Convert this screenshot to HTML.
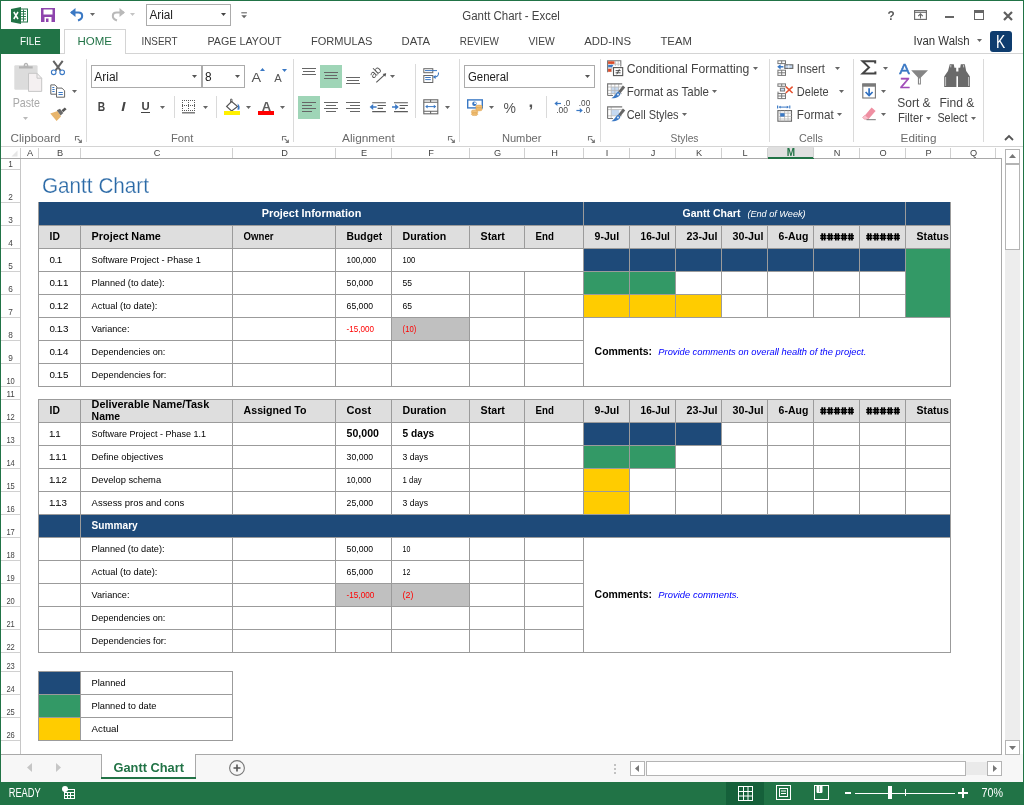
<!DOCTYPE html>
<html><head><meta charset="utf-8"><title>Gantt Chart - Excel</title>
<style>
html,body{margin:0;padding:0}
body{width:1024px;height:805px;position:relative;overflow:hidden;background:#fff;font-family:"Liberation Sans",sans-serif;color:#000}
.a{position:absolute;box-sizing:border-box}
.t{white-space:nowrap;line-height:1;transform:translateY(-50%)}
.tc{white-space:nowrap;line-height:1;transform:translate(-50%,-50%)}
.tr{white-space:nowrap;line-height:1;transform:translate(-100%,-50%)}
.rib{font-size:12px;color:#444}
.lbl{font-size:12px;color:#6a6a6a}
.tab{font-size:11px;color:#444}
.cell{font-size:9.2px;color:#000}
.b{font-weight:bold;font-size:10px;letter-spacing:.5px}
.hn{font-size:10px;color:#333}
svg{position:absolute;overflow:visible}
.gs{will-change:transform}

</style></head>
<body>
<div class="a " style="left:0px;top:0px;width:1024px;height:1px;background:#217346"></div>
<div class="a " style="left:0px;top:0px;width:1px;height:805px;background:#217346"></div>
<div class="a " style="left:1023px;top:0px;width:1px;height:805px;background:#217346"></div>
<div class="a " style="left:146px;top:4px;width:85px;height:22px;border:1px solid #ababab;background:#fff"></div>
<svg class="a" style="left:221.0px;top:13.1px" width="5" height="3"><path d="M0 0H5L2.5 3Z" fill="#444"/></svg>
<svg class="a" style="left:240.5px;top:12.4px" width="7" height="8"><path d="M0.3 0.8H5.9" stroke="#666" stroke-width="1.1"/><path d="M0.3 3.2H5.9L3.1 6.2Z" fill="#666"/></svg>
<div class="a " style="left:1px;top:53px;width:1022px;height:1px;background:#d4d4d4"></div>
<div class="a " style="left:1px;top:29px;width:59px;height:25px;background:#217346"></div>
<div class="a " style="left:64px;top:29px;width:62px;height:25px;border:1px solid #d4d4d4;border-bottom:none;background:#fff"></div>
<svg class="a" style="left:977.0px;top:38.9px" width="5" height="3"><path d="M0 0H5L2.5 3Z" fill="#666"/></svg>
<div class="a " style="left:990px;top:31px;width:22px;height:21px;background:#0e3c6e;border-radius:3px"></div>
<div class="a " style="left:1px;top:146px;width:1022px;height:1px;background:#d4d4d4"></div>
<div class="a " style="left:86px;top:59px;width:1px;height:83px;background:#dadada"></div>
<div class="a " style="left:293px;top:59px;width:1px;height:83px;background:#dadada"></div>
<div class="a " style="left:459px;top:59px;width:1px;height:83px;background:#dadada"></div>
<div class="a " style="left:600px;top:59px;width:1px;height:83px;background:#dadada"></div>
<div class="a " style="left:769px;top:59px;width:1px;height:83px;background:#dadada"></div>
<div class="a " style="left:853px;top:59px;width:1px;height:83px;background:#dadada"></div>
<div class="a " style="left:983px;top:59px;width:1px;height:83px;background:#dadada"></div>
<div class="a " style="left:174px;top:96px;width:1px;height:22px;background:#dadada"></div>
<div class="a " style="left:216px;top:96px;width:1px;height:22px;background:#dadada"></div>
<div class="a " style="left:415px;top:64px;width:1px;height:54px;background:#dadada"></div>
<div class="a " style="left:546px;top:96px;width:1px;height:22px;background:#dadada"></div>
<svg class="a" style="left:75.3px;top:135.5px" width="8" height="8"><path d="M0.5 4.4V0.5H4.4" fill="none" stroke="#777" stroke-width="1.1"/><path d="M2.6 2.6L6.2 6.2" fill="none" stroke="#777" stroke-width="1.1"/><path d="M6.9 3.2V6.9H3.2Z" fill="#777"/></svg>
<svg class="a" style="left:282.3px;top:135.5px" width="8" height="8"><path d="M0.5 4.4V0.5H4.4" fill="none" stroke="#777" stroke-width="1.1"/><path d="M2.6 2.6L6.2 6.2" fill="none" stroke="#777" stroke-width="1.1"/><path d="M6.9 3.2V6.9H3.2Z" fill="#777"/></svg>
<svg class="a" style="left:448.3px;top:135.5px" width="8" height="8"><path d="M0.5 4.4V0.5H4.4" fill="none" stroke="#777" stroke-width="1.1"/><path d="M2.6 2.6L6.2 6.2" fill="none" stroke="#777" stroke-width="1.1"/><path d="M6.9 3.2V6.9H3.2Z" fill="#777"/></svg>
<svg class="a" style="left:588.3px;top:135.5px" width="8" height="8"><path d="M0.5 4.4V0.5H4.4" fill="none" stroke="#777" stroke-width="1.1"/><path d="M2.6 2.6L6.2 6.2" fill="none" stroke="#777" stroke-width="1.1"/><path d="M6.9 3.2V6.9H3.2Z" fill="#777"/></svg>
<svg class="a" style="left:14px;top:62px" width="29" height="31"><rect x="0.3" y="3.3" width="23.3" height="24.4" rx="1.2" fill="#dcdcdc"/><path d="M5 6.6V4.2H9.6C9.6 -0.4 14.4 -0.4 14.4 4.2H18.7V6.6Z" fill="#b4b4b4"/><circle cx="12" cy="3" r="1" fill="#e8e8e8"/><path d="M14.5 11.3H23L27.7 16.2V29.4H14.5Z" fill="#f4f0f1" stroke="#c6c6c6"/><path d="M23 11.3V16.2H27.7" fill="none" stroke="#c6c6c6"/></svg>
<svg class="a" style="left:23.1px;top:117.2px" width="5" height="3"><path d="M0 0H5L2.5 3Z" fill="#b9b9b9"/></svg>
<svg class="a" style="left:50px;top:60px" width="16" height="16"><path d="M3.3 0.8L10.6 10.6M12.7 0.8L5.4 10.6" stroke="#636363" stroke-width="2" fill="none"/><circle cx="3.7" cy="12.3" r="2.3" fill="#fff" stroke="#3a78c4" stroke-width="1.1"/><circle cx="12.2" cy="12.3" r="2.3" fill="#fff" stroke="#3a78c4" stroke-width="1.1"/></svg>
<svg class="a" style="left:50px;top:84px" width="16" height="14"><path d="M0.8 0.9H5L7 3V10.2H0.8Z" fill="#fff" stroke="#666"/><path d="M6.5 4.1H12L14.6 6.8V13.2H6.5Z" fill="#fff" stroke="#666"/><path d="M8.5 8.5H12.8M8.5 10.5H12.8" stroke="#3a78c4"/><path d="M2.3 3.5H4.3M2.3 5.5H4.6M2.3 7.5H4.6" stroke="#3a78c4"/></svg>
<svg class="a" style="left:72.0px;top:89.8px" width="5" height="3"><path d="M0 0H5L2.5 3Z" fill="#666"/></svg>
<svg class="a" style="left:50px;top:107px" width="17" height="15"><path d="M0.3 6.6L7.6 4.1L11 9.5L6.6 13.9Z" fill="#e8b56c"/><path d="M6.8 3.3L10 1.8L13.3 6L10.6 8.6Z" fill="#6a6a6a"/><path d="M11.5 3.3L14.8 0.4L16.6 2.2L13.2 5.3Z" fill="#555"/></svg>
<div class="a " style="left:91px;top:65px;width:111px;height:23px;border:1px solid #ababab;background:#fff"></div>
<div class="a " style="left:202px;top:65px;width:43px;height:23px;border:1px solid #ababab;background:#fff"></div>
<svg class="a" style="left:191.7px;top:75.0px" width="5" height="3"><path d="M0 0H5L2.5 3Z" fill="#555"/></svg>
<svg class="a" style="left:235.0px;top:75.0px" width="5" height="3"><path d="M0 0H5L2.5 3Z" fill="#555"/></svg>
<svg class="a" style="left:259.5px;top:68px" width="5" height="3"><path d="M0 3H5L2.5 0Z" fill="#3a78c4"/></svg>
<svg class="a" style="left:281.5px;top:68.5px" width="5" height="3"><path d="M0 0H5L2.5 3Z" fill="#3a78c4"/></svg>
<div class="a " style="left:141px;top:111.5px;width:9px;height:1px;background:#444"></div>
<svg class="a" style="left:160.0px;top:105.8px" width="5" height="3"><path d="M0 0H5L2.5 3Z" fill="#666"/></svg>
<svg class="a" style="left:182px;top:100px" width="14" height="14"><path d="M0.5 0V11M6.5 0V11M12.5 0V11M0 0.5H13M0 5.5H13M0 10.5H13" stroke="#5a5a5a" stroke-dasharray="1 1" fill="none"/><path d="M0 12.8H13" stroke="#666" stroke-width="1.3"/></svg>
<svg class="a" style="left:202.8px;top:105.8px" width="5" height="3"><path d="M0 0H5L2.5 3Z" fill="#666"/></svg>
<svg class="a" style="left:224px;top:98px" width="17" height="18"><path d="M2.6 8.5L7.6 3.5L13.6 8.5L7.6 13Z" fill="#fff" stroke="#555" stroke-width="1.1"/><path d="M6.6 5V1.2H8V4" stroke="#555" fill="none" stroke-width=".9"/><path d="M13.4 5.5C15.6 7 16.2 9.5 15.2 11.8L13.2 11.4C14.3 9.8 14.2 7.6 13.4 5.5Z" fill="#3a78c4"/><rect x="0" y="13" width="16" height="4" fill="#fff000"/></svg>
<svg class="a" style="left:246.0px;top:105.8px" width="5" height="3"><path d="M0 0H5L2.5 3Z" fill="#666"/></svg>
<div class="a " style="left:258px;top:111px;width:16px;height:4px;background:#f00"></div>
<svg class="a" style="left:279.8px;top:105.8px" width="5" height="3"><path d="M0 0H5L2.5 3Z" fill="#666"/></svg>
<div class="a " style="left:320px;top:65px;width:22px;height:23px;background:#9fd5b7"></div>
<div class="a " style="left:298px;top:96px;width:22px;height:23px;background:#9fd5b7"></div>
<svg class="a" style="left:302px;top:68px" width="16" height="9"><path d="M0 0.5H14M1 3.5H13M0 6.5H14" stroke="#666" stroke-width="1"/></svg>
<svg class="a" style="left:324px;top:72px" width="16" height="9"><path d="M0 0.5H14M1 3.5H13M0 6.5H14" stroke="#666" stroke-width="1"/></svg>
<svg class="a" style="left:346px;top:77px" width="16" height="9"><path d="M0 0.5H14M1 3.5H13M0 6.5H14" stroke="#666" stroke-width="1"/></svg>
<svg class="a" style="left:302px;top:102px" width="16" height="12"><path d="M0 0.5H14M0 3.5H10M0 6.5H14M0 9.5H10" stroke="#666" stroke-width="1"/></svg>
<svg class="a" style="left:324px;top:102px" width="16" height="12"><path d="M0 0.5H14M2 3.5H12M0 6.5H14M2 9.5H12" stroke="#666" stroke-width="1"/></svg>
<svg class="a" style="left:346px;top:102px" width="16" height="12"><path d="M0 0.5H14M4 3.5H14M0 6.5H14M4 9.5H14" stroke="#666" stroke-width="1"/></svg>
<svg class="a gs" style="left:368px;top:64px" width="20" height="20" font-family="Liberation Sans, sans-serif"><text x="0" y="0" font-size="11" fill="#555" transform="translate(5.4 15) rotate(-45)">ab</text><path d="M8.3 18.3L17.6 9.8" stroke="#555" stroke-width="1.1" fill="none"/><path d="M18.2 9.2L14.6 10L17.4 12.8Z" fill="#555"/></svg>
<svg class="a" style="left:389.8px;top:75.0px" width="5" height="3"><path d="M0 0H5L2.5 3Z" fill="#666"/></svg>
<svg class="a" style="left:369px;top:102px" width="18" height="11"><path d="M3.2 0.7H16.9M8.6 3.5H16.9M8.6 6.4H14M3.2 9.6H16.9" stroke="#5a5a5a" stroke-width="1.1"/><path d="M3.2 0.7H5.2M3.2 9.6H5.2" stroke="#fff" stroke-width="0" /><path d="M7.6 5H2" stroke="#3a78c4" stroke-width="1.5" fill="none"/><path d="M0.6 5L4.2 2V8Z" fill="#3a78c4"/></svg>
<svg class="a" style="left:391px;top:102px" width="18" height="11"><path d="M3 0.7H16.9M8.6 3.5H16.9M8.6 6.4H14M3 9.6H16.9" stroke="#5a5a5a" stroke-width="1.1"/><path d="M1 5H6" stroke="#3a78c4" stroke-width="1.5" fill="none"/><path d="M7.8 5L4.2 2V8Z" fill="#3a78c4"/></svg>
<svg class="a" style="left:423px;top:67px" width="17" height="17"><rect x="0.8" y="1.7" width="9" height="4" fill="#fff" stroke="#666"/><path d="M2 3.6H14" stroke="#3a78c4"/><rect x="0.8" y="8.5" width="9" height="7" fill="#fff" stroke="#666"/><path d="M2.2 10.5H7.8M2.2 12.6H7.8" stroke="#3a78c4"/><path d="M15.4 5.5C16.2 8.5 14 10 11 10" fill="none" stroke="#3a78c4" stroke-width="1.1"/><path d="M9.8 10L12.6 8V12Z" fill="#3a78c4"/></svg>
<svg class="a" style="left:423px;top:99px" width="16" height="16"><rect x="0.8" y="0.8" width="14" height="14" fill="#fff" stroke="#666" stroke-width="1.1"/><path d="M0.8 3.2H14.8M0.8 12.2H14.8M7.6 0.8V3.2M7.6 12.2V14.8" stroke="#666" stroke-width="1.1"/><path d="M3.4 7.6H12.2" stroke="#3a78c4"/><path d="M2.2 7.6L4.6 5.8V9.4ZM13.2 7.6L10.8 5.8V9.4Z" fill="#3a78c4"/></svg>
<svg class="a" style="left:444.5px;top:105.8px" width="5" height="3"><path d="M0 0H5L2.5 3Z" fill="#666"/></svg>
<div class="a " style="left:464px;top:65px;width:131px;height:23px;border:1px solid #ababab;background:#fff"></div>
<svg class="a" style="left:584.5px;top:75.0px" width="5" height="3"><path d="M0 0H5L2.5 3Z" fill="#555"/></svg>
<svg class="a" style="left:467px;top:99px" width="17" height="17"><rect x="0.7" y="0.9" width="14.6" height="8" fill="#fff" stroke="#3a78c4" stroke-width="1.4"/><circle cx="7.4" cy="4.7" r="2.2" fill="#3a78c4"/><path d="M7 3.6H9V5H7.4" fill="#fff"/><g fill="#f1c27b" stroke="#d99b44" stroke-width=".5"><ellipse cx="12" cy="10.6" rx="3.2" ry="1.3"/><ellipse cx="12" cy="8.9" rx="3.2" ry="1.3"/><ellipse cx="12" cy="7.4" rx="3.2" ry="1.3"/><ellipse cx="7.6" cy="15.3" rx="3.2" ry="1.3"/><ellipse cx="7.6" cy="13.7" rx="3.2" ry="1.3"/><ellipse cx="7.6" cy="12.2" rx="3.2" ry="1.3"/></g></svg>
<svg class="a" style="left:489.0px;top:105.8px" width="5" height="3"><path d="M0 0H5L2.5 3Z" fill="#666"/></svg>
<svg class="a" style="left:554px;top:100px" width="8" height="7"><path d="M7 3.5H1.6" stroke="#3a78c4" stroke-width="1.2"/><path d="M0.4 3.5L3.4 1V6Z" fill="#3a78c4"/></svg>
<svg class="a" style="left:576px;top:107px" width="8" height="7"><path d="M0.4 3.5H5.4" stroke="#3a78c4" stroke-width="1.2"/><path d="M6.8 3.5L3.8 1V6Z" fill="#3a78c4"/></svg>
<svg class="a" style="left:607px;top:60px" width="17" height="17"><rect x="0.6" y="0.8" width="13.2" height="11.4" fill="#fff"/><path d="M0.6 12.2V0.8H13.8V6.5" fill="none" stroke="#777" stroke-width="1.1"/><path d="M4.6 1V12M8.4 1V6M11.2 1V6M1 4.2H13.6M1 8H6" stroke="#bbb" stroke-width=".8"/><rect x="1.1" y="1.3" width="6.4" height="2.6" fill="#dc4b28"/><path d="M1.1 5H6.4L5 7.3H1.1Z" fill="#3a78c4"/><rect x="1.1" y="8.8" width="3.2" height="3" fill="#dc4b28"/><rect x="6.5" y="7.6" width="9.2" height="8" fill="#fff" stroke="#555" stroke-width="1.1"/><path d="M8.6 10.6H13.6M8.6 12.8H13.6M9.8 14.3L12.4 9.2" stroke="#444" stroke-width=".9"/></svg>
<svg class="a" style="left:753.1px;top:67.3px" width="5" height="3"><path d="M0 0H5L2.5 3Z" fill="#666"/></svg>
<svg class="a" style="left:604px;top:81px" width="20" height="18"><g transform="translate(3 2)"><rect x="0.6" y="0.9" width="14.6" height="11.6" fill="#fff"/><rect x="4.2" y="4" width="7.6" height="6.6" fill="#c5d9f1"/><path d="M4.2 1V12.4M7.8 1V12.4M11.6 1V12.4M0.6 4H15M0.6 7.4H15M0.6 10.6H15" stroke="#b5b5b5" stroke-width=".8"/><path d="M0.6 12.5V0.9H15.2M0.6 12.5H6" fill="none" stroke="#777" stroke-width="1.1"/><path d="M15.9 2.4L18.2 4.4L13.4 10.2L11.2 8.4Z" fill="#666"/><path d="M11.2 8.6L13.4 10.4C13.2 13.4 9 15.6 4.4 15.2C7.4 13.6 8.6 10.4 11.2 8.6Z" fill="#3a78c4"/><circle cx="11" cy="11.6" r="1" fill="#dfe9f6"/></g></svg>
<svg class="a" style="left:711.8px;top:90.0px" width="5" height="3"><path d="M0 0H5L2.5 3Z" fill="#666"/></svg>
<svg class="a" style="left:604px;top:104px" width="20" height="18"><g transform="translate(3 2)"><rect x="0.6" y="0.9" width="14.6" height="11.6" fill="#fff"/><rect x="4.2" y="3.8" width="8" height="5.8" fill="#c5d9f1"/><path d="M4.2 1V12.4M0.6 3.6H15M0.6 9.8H15" stroke="#b5b5b5" stroke-width=".8"/><path d="M0.6 12.5V0.9H15.2M0.6 12.5H6" fill="none" stroke="#777" stroke-width="1.1"/><path d="M15.9 2.4L18.2 4.4L13.4 10.2L11.2 8.4Z" fill="#666"/><path d="M11.2 8.6L13.4 10.4C13.2 13.4 9 15.6 4.4 15.2C7.4 13.6 8.6 10.4 11.2 8.6Z" fill="#3a78c4"/><circle cx="11" cy="11.6" r="1" fill="#dfe9f6"/></g></svg>
<svg class="a" style="left:681.9px;top:113.0px" width="5" height="3"><path d="M0 0H5L2.5 3Z" fill="#666"/></svg>
<svg class="a" style="left:777px;top:60px" width="17" height="17"><rect x="0.9" y="0.8" width="7.6" height="2.8" fill="#fff" stroke="#777"/><path d="M4.7 0.8V3.6" stroke="#777"/><rect x="7.8" y="4.8" width="8" height="3.6" fill="#c5d9f1" stroke="#666" stroke-width="1.1"/><path d="M11.8 4.8V8.4" stroke="#fff" stroke-width=".8"/><rect x="0.9" y="10.2" width="7.6" height="5.2" fill="#fff" stroke="#777"/><path d="M4.7 10.2V15.4M0.9 12.8H8.5" stroke="#777"/><path d="M6.4 6.8H2" stroke="#3a78c4" stroke-width="1.5"/><path d="M0.2 6.8L3.6 4.2V9.4Z" fill="#3a78c4"/></svg>
<svg class="a" style="left:835.0px;top:67.3px" width="5" height="3"><path d="M0 0H5L2.5 3Z" fill="#666"/></svg>
<svg class="a" style="left:777px;top:83px" width="17" height="17"><rect x="0.9" y="0.9" width="7.6" height="2.4" fill="#fff" stroke="#777"/><path d="M4.7 0.9V3.3" stroke="#777"/><rect x="3.4" y="5.2" width="4.2" height="2.8" fill="#c5d9f1" stroke="#777"/><rect x="0.9" y="10.6" width="7.6" height="5" fill="#fff" stroke="#777"/><path d="M4.7 10.6V15.6M0.9 13H8.5M1 8.6V10.4H3" stroke="#777" fill="none"/><path d="M8.8 3.6L15.6 10M15.6 3.6L8.8 10" stroke="#e4502e" stroke-width="1.5"/></svg>
<svg class="a" style="left:838.9px;top:90.0px" width="5" height="3"><path d="M0 0H5L2.5 3Z" fill="#666"/></svg>
<svg class="a" style="left:777px;top:105px" width="17" height="18"><path d="M0.6 0.6V3.6M12.8 0.6V3.6" stroke="#3a78c4" stroke-width="1.1"/><path d="M3 2.1H10.4" stroke="#3a78c4"/><path d="M1.4 2.1L3.6 0.7V3.5ZM12 2.1L9.8 0.7V3.5Z" fill="#3a78c4"/><rect x="0.9" y="5.6" width="13.6" height="10.6" fill="#fff" stroke="#666" stroke-width="1.1"/><path d="M0.9 8.2H14.5M0.9 11.4H14.5M0.9 14H14.5M3.2 5.6V16.2M7.6 5.6V16.2M11 5.6V16.2" stroke="#b5b5b5" stroke-width=".8"/><rect x="3.2" y="8.2" width="4.4" height="3.4" fill="#3a78c4"/></svg>
<svg class="a" style="left:836.9px;top:113.0px" width="5" height="3"><path d="M0 0H5L2.5 3Z" fill="#666"/></svg>
<svg class="a" style="left:861px;top:60px" width="16" height="15"><path d="M14.2 3.4V1.2H1.6L8 7.4L1.6 13.6H14.4V11.4" fill="none" stroke="#444" stroke-width="2"/></svg>
<svg class="a" style="left:882.9px;top:67.1px" width="5" height="3"><path d="M0 0H5L2.5 3Z" fill="#666"/></svg>
<svg class="a" style="left:862px;top:83px" width="15" height="16"><rect x="0.8" y="1" width="12.6" height="14" fill="#fff" stroke="#777" stroke-width="1.1"/><rect x="0.3" y="0.5" width="13.6" height="3.2" fill="#7a7a7a"/><path d="M7.1 5.2V12" stroke="#2f6fc0" stroke-width="1.7"/><path d="M3.6 9L7.1 12.6L10.6 9" stroke="#2f6fc0" stroke-width="1.7" fill="none"/></svg>
<svg class="a" style="left:881.0px;top:89.8px" width="5" height="3"><path d="M0 0H5L2.5 3Z" fill="#666"/></svg>
<svg class="a" style="left:862px;top:107px" width="16" height="14"><path d="M9.6 0.6L13.6 4L7 11.6L3 8.2Z" fill="#ef8fa2"/><path d="M3 8.2L7 11.6L5.8 12.2H2.4L0.6 10.4Z" fill="#f7c2cc" stroke="#ef8fa2" stroke-width=".7"/><path d="M4.5 12.7H13.8" stroke="#777"/></svg>
<svg class="a" style="left:881.0px;top:112.9px" width="5" height="3"><path d="M0 0H5L2.5 3Z" fill="#666"/></svg>
<svg class="a" style="left:911px;top:70px" width="18" height="15"><path d="M0.2 0.2H17L9.9 7.6V14.4H6.9V7.6Z" fill="#858585"/><path d="M8 8.4V13.4H8.9V8.4Z" fill="#fff"/></svg>
<svg class="a" style="left:925.9px;top:116.9px" width="5" height="3"><path d="M0 0H5L2.5 3Z" fill="#666"/></svg>
<svg class="a" style="left:944px;top:64px" width="27" height="24"><path d="M5.8 0.2H9.8L10.4 3.8H12.2V7.6H14.4V3.8H16.2L16.8 0.2H20.8L22.2 7L25.9 12.4V22.9H14V12.2H12.4V22.9H0.2V12.4L4 7Z" fill="#6a6a6a"/><path d="M1.6 13V22M24.6 13V22M6.8 1V3.4M19.6 1V3.4" stroke="#d0d0d0" stroke-width=".9"/></svg>
<svg class="a" style="left:970.6px;top:116.9px" width="5" height="3"><path d="M0 0H5L2.5 3Z" fill="#666"/></svg>
<svg class="a" style="left:1004px;top:134px" width="10" height="7"><path d="M1 6L5 2L9 6" fill="none" stroke="#555" stroke-width="1.8"/></svg>
<svg class="a" style="left:914px;top:10px" width="13" height="10"><rect x="0.6" y="0.6" width="11.8" height="8.8" fill="none" stroke="#666" stroke-width="1.1"/><path d="M0.6 2.3H12.4" stroke="#666" stroke-width="1.1"/><path d="M6.5 8.6V4.2M4.2 6.2L6.5 3.8L8.8 6.2" stroke="#666" fill="none" stroke-width="1.1"/></svg>
<div class="a " style="left:945px;top:15.8px;width:9px;height:2.4px;background:#666"></div>
<svg class="a" style="left:974px;top:10px" width="10" height="10"><rect x="0.5" y="0.5" width="9" height="9" fill="none" stroke="#666"/><rect x="0" y="0" width="10" height="3" fill="#666"/></svg>
<svg class="a" style="left:1003px;top:11px" width="10" height="10"><path d="M1 1L9 9M9 1L1 9" stroke="#5e5e5e" stroke-width="2.2"/></svg>
<svg class="a" style="left:11px;top:7px" width="17" height="17"><rect x="8" y="2" width="8.5" height="13" fill="#fff" stroke="#217346"/><path d="M10 4.5H15M10 7H15M10 9.5H15M10 12H15M12.5 2.5V14.5" stroke="#217346" stroke-width=".9"/><path d="M0 2L10 0V17L0 15Z" fill="#217346"/><path d="M2.8 5L7 12M7 5L2.8 12" stroke="#fff" stroke-width="1.5"/></svg>
<svg class="a" style="left:41px;top:8px" width="14" height="14"><path d="M0 0H14V14H0Z" fill="#8e44ad"/><rect x="2.5" y="1.5" width="9" height="5" fill="#fff"/><rect x="3.5" y="9" width="7" height="5" fill="#fff"/><rect x="5" y="10.5" width="2.5" height="3.5" fill="#8e44ad"/></svg>
<svg class="a" style="left:70px;top:8px" width="15" height="14"><path d="M1 4.5H8.5C13 4.5 14 10.5 8 12.5" fill="none" stroke="#3a78c4" stroke-width="2"/><path d="M0 4.5L5.5 0V9Z" fill="#3a78c4"/></svg>
<svg class="a" style="left:90.1px;top:12.8px" width="5" height="3"><path d="M0 0H5L2.5 3Z" fill="#666"/></svg>
<svg class="a" style="left:110px;top:8px" width="15" height="14"><path d="M14 4.5H6.5C2 4.5 1 10.5 7 12.5" fill="none" stroke="#b9b9b9" stroke-width="2"/><path d="M15 4.5L9.5 0V9Z" fill="#b9b9b9"/></svg>
<svg class="a" style="left:129.9px;top:12.8px" width="5" height="3"><path d="M0 0H5L2.5 3Z" fill="#c4c4c4"/></svg>
<svg class="a" style="left:11px;top:150px" width="7" height="7"><path d="M6.5 0.5V6.5H0.5Z" fill="#e6e6e6"/></svg>
<div class="a " style="left:1px;top:158px;width:1001px;height:1px;background:#a9a9a9"></div>
<div class="a " style="left:768px;top:147px;width:46px;height:11px;background:#e0e0e0"></div>
<div class="a " style="left:768px;top:157px;width:46px;height:2px;background:#217346"></div>
<div class="a " style="left:20px;top:148px;width:1px;height:10px;background:#d0d0d0"></div>
<div class="a " style="left:38px;top:148px;width:1px;height:10px;background:#d0d0d0"></div>
<div class="a " style="left:80px;top:148px;width:1px;height:10px;background:#d0d0d0"></div>
<div class="a " style="left:232px;top:148px;width:1px;height:10px;background:#d0d0d0"></div>
<div class="a " style="left:335px;top:148px;width:1px;height:10px;background:#d0d0d0"></div>
<div class="a " style="left:391px;top:148px;width:1px;height:10px;background:#d0d0d0"></div>
<div class="a " style="left:469px;top:148px;width:1px;height:10px;background:#d0d0d0"></div>
<div class="a " style="left:524px;top:148px;width:1px;height:10px;background:#d0d0d0"></div>
<div class="a " style="left:583px;top:148px;width:1px;height:10px;background:#d0d0d0"></div>
<div class="a " style="left:629px;top:148px;width:1px;height:10px;background:#d0d0d0"></div>
<div class="a " style="left:675px;top:148px;width:1px;height:10px;background:#d0d0d0"></div>
<div class="a " style="left:721px;top:148px;width:1px;height:10px;background:#d0d0d0"></div>
<div class="a " style="left:767px;top:148px;width:1px;height:10px;background:#d0d0d0"></div>
<div class="a " style="left:813px;top:148px;width:1px;height:10px;background:#d0d0d0"></div>
<div class="a " style="left:859px;top:148px;width:1px;height:10px;background:#d0d0d0"></div>
<div class="a " style="left:905px;top:148px;width:1px;height:10px;background:#d0d0d0"></div>
<div class="a " style="left:950px;top:148px;width:1px;height:10px;background:#d0d0d0"></div>
<div class="a " style="left:995px;top:148px;width:1px;height:10px;background:#d0d0d0"></div>
<div class="a " style="left:20px;top:159px;width:1px;height:595px;background:#c6c6c6"></div>
<div class="a " style="left:1px;top:169px;width:19px;height:1px;background:#d0d0d0"></div>
<div class="a " style="left:1px;top:202px;width:19px;height:1px;background:#d0d0d0"></div>
<div class="a " style="left:1px;top:225px;width:19px;height:1px;background:#d0d0d0"></div>
<div class="a " style="left:1px;top:248px;width:19px;height:1px;background:#d0d0d0"></div>
<div class="a " style="left:1px;top:271px;width:19px;height:1px;background:#d0d0d0"></div>
<div class="a " style="left:1px;top:294px;width:19px;height:1px;background:#d0d0d0"></div>
<div class="a " style="left:1px;top:317px;width:19px;height:1px;background:#d0d0d0"></div>
<div class="a " style="left:1px;top:340px;width:19px;height:1px;background:#d0d0d0"></div>
<div class="a " style="left:1px;top:363px;width:19px;height:1px;background:#d0d0d0"></div>
<div class="a " style="left:1px;top:386px;width:19px;height:1px;background:#d0d0d0"></div>
<div class="a " style="left:1px;top:399px;width:19px;height:1px;background:#d0d0d0"></div>
<div class="a " style="left:1px;top:422px;width:19px;height:1px;background:#d0d0d0"></div>
<div class="a " style="left:1px;top:445px;width:19px;height:1px;background:#d0d0d0"></div>
<div class="a " style="left:1px;top:468px;width:19px;height:1px;background:#d0d0d0"></div>
<div class="a " style="left:1px;top:491px;width:19px;height:1px;background:#d0d0d0"></div>
<div class="a " style="left:1px;top:514px;width:19px;height:1px;background:#d0d0d0"></div>
<div class="a " style="left:1px;top:537px;width:19px;height:1px;background:#d0d0d0"></div>
<div class="a " style="left:1px;top:560px;width:19px;height:1px;background:#d0d0d0"></div>
<div class="a " style="left:1px;top:583px;width:19px;height:1px;background:#d0d0d0"></div>
<div class="a " style="left:1px;top:606px;width:19px;height:1px;background:#d0d0d0"></div>
<div class="a " style="left:1px;top:629px;width:19px;height:1px;background:#d0d0d0"></div>
<div class="a " style="left:1px;top:652px;width:19px;height:1px;background:#d0d0d0"></div>
<div class="a " style="left:1px;top:671px;width:19px;height:1px;background:#d0d0d0"></div>
<div class="a " style="left:1px;top:694px;width:19px;height:1px;background:#d0d0d0"></div>
<div class="a " style="left:1px;top:717px;width:19px;height:1px;background:#d0d0d0"></div>
<div class="a " style="left:1px;top:740px;width:19px;height:1px;background:#d0d0d0"></div>
<div class="a " style="left:1001px;top:158px;width:1px;height:596px;background:#a9a9a9"></div>
<div class="a " style="left:39px;top:203px;width:911px;height:22px;background:#1e4a79"></div>
<div class="a " style="left:39px;top:226px;width:911px;height:22px;background:#dedede"></div>
<div class="a " style="left:584px;top:249px;width:321px;height:22px;background:#1e4a79"></div>
<div class="a " style="left:584px;top:272px;width:91px;height:22px;background:#339966"></div>
<div class="a " style="left:584px;top:295px;width:137px;height:22px;background:#ffcc00"></div>
<div class="a " style="left:392px;top:318px;width:77px;height:22px;background:#c0c0c0"></div>
<div class="a " style="left:38px;top:202px;width:913px;height:1px;background:#9b9b9b"></div>
<div class="a " style="left:38px;top:225px;width:913px;height:1px;background:#9b9b9b"></div>
<div class="a " style="left:38px;top:248px;width:913px;height:1px;background:#9b9b9b"></div>
<div class="a " style="left:38px;top:271px;width:913px;height:1px;background:#9b9b9b"></div>
<div class="a " style="left:38px;top:294px;width:913px;height:1px;background:#9b9b9b"></div>
<div class="a " style="left:38px;top:317px;width:913px;height:1px;background:#9b9b9b"></div>
<div class="a " style="left:38px;top:340px;width:546px;height:1px;background:#9b9b9b"></div>
<div class="a " style="left:38px;top:363px;width:546px;height:1px;background:#9b9b9b"></div>
<div class="a " style="left:38px;top:386px;width:913px;height:1px;background:#9b9b9b"></div>
<div class="a " style="left:38px;top:202px;width:1px;height:185px;background:#9b9b9b"></div>
<div class="a " style="left:950px;top:202px;width:1px;height:185px;background:#9b9b9b"></div>
<div class="a " style="left:583px;top:202px;width:1px;height:185px;background:#9b9b9b"></div>
<div class="a " style="left:905px;top:202px;width:1px;height:116px;background:#9b9b9b"></div>
<div class="a " style="left:80px;top:225px;width:1px;height:162px;background:#9b9b9b"></div>
<div class="a " style="left:232px;top:225px;width:1px;height:162px;background:#9b9b9b"></div>
<div class="a " style="left:335px;top:225px;width:1px;height:162px;background:#9b9b9b"></div>
<div class="a " style="left:391px;top:225px;width:1px;height:162px;background:#9b9b9b"></div>
<div class="a " style="left:469px;top:225px;width:1px;height:24px;background:#9b9b9b"></div>
<div class="a " style="left:469px;top:271px;width:1px;height:116px;background:#9b9b9b"></div>
<div class="a " style="left:524px;top:225px;width:1px;height:24px;background:#9b9b9b"></div>
<div class="a " style="left:524px;top:271px;width:1px;height:116px;background:#9b9b9b"></div>
<div class="a " style="left:629px;top:225px;width:1px;height:93px;background:#9b9b9b"></div>
<div class="a " style="left:675px;top:225px;width:1px;height:93px;background:#9b9b9b"></div>
<div class="a " style="left:721px;top:225px;width:1px;height:93px;background:#9b9b9b"></div>
<div class="a " style="left:767px;top:225px;width:1px;height:93px;background:#9b9b9b"></div>
<div class="a " style="left:813px;top:225px;width:1px;height:93px;background:#9b9b9b"></div>
<div class="a " style="left:859px;top:225px;width:1px;height:93px;background:#9b9b9b"></div>
<div class="a " style="left:906px;top:249px;width:44px;height:68px;background:#339966"></div>
<div class="a " style="left:39px;top:202px;width:544px;height:1px;background:#1e4a79"></div>
<div class="a " style="left:584px;top:202px;width:321px;height:1px;background:#1e4a79"></div>
<div class="a " style="left:906px;top:202px;width:44px;height:1px;background:#1e4a79"></div>
<div class="a " style="left:39px;top:400px;width:911px;height:22px;background:#dedede"></div>
<div class="a " style="left:39px;top:515px;width:911px;height:22px;background:#1e4a79"></div>
<div class="a " style="left:584px;top:423px;width:137px;height:22px;background:#1e4a79"></div>
<div class="a " style="left:584px;top:446px;width:91px;height:22px;background:#339966"></div>
<div class="a " style="left:584px;top:469px;width:45px;height:45px;background:#ffcc00"></div>
<div class="a " style="left:336px;top:584px;width:133px;height:22px;background:#c0c0c0"></div>
<div class="a " style="left:38px;top:399px;width:913px;height:1px;background:#9b9b9b"></div>
<div class="a " style="left:38px;top:422px;width:913px;height:1px;background:#9b9b9b"></div>
<div class="a " style="left:38px;top:445px;width:913px;height:1px;background:#9b9b9b"></div>
<div class="a " style="left:38px;top:468px;width:913px;height:1px;background:#9b9b9b"></div>
<div class="a " style="left:38px;top:491px;width:913px;height:1px;background:#9b9b9b"></div>
<div class="a " style="left:38px;top:514px;width:913px;height:1px;background:#9b9b9b"></div>
<div class="a " style="left:38px;top:537px;width:913px;height:1px;background:#9b9b9b"></div>
<div class="a " style="left:38px;top:560px;width:546px;height:1px;background:#9b9b9b"></div>
<div class="a " style="left:38px;top:583px;width:546px;height:1px;background:#9b9b9b"></div>
<div class="a " style="left:38px;top:606px;width:546px;height:1px;background:#9b9b9b"></div>
<div class="a " style="left:38px;top:629px;width:546px;height:1px;background:#9b9b9b"></div>
<div class="a " style="left:38px;top:652px;width:913px;height:1px;background:#9b9b9b"></div>
<div class="a " style="left:38px;top:399px;width:1px;height:254px;background:#9b9b9b"></div>
<div class="a " style="left:950px;top:399px;width:1px;height:254px;background:#9b9b9b"></div>
<div class="a " style="left:80px;top:399px;width:1px;height:254px;background:#9b9b9b"></div>
<div class="a " style="left:232px;top:399px;width:1px;height:116px;background:#9b9b9b"></div>
<div class="a " style="left:232px;top:537px;width:1px;height:116px;background:#9b9b9b"></div>
<div class="a " style="left:335px;top:399px;width:1px;height:116px;background:#9b9b9b"></div>
<div class="a " style="left:335px;top:537px;width:1px;height:116px;background:#9b9b9b"></div>
<div class="a " style="left:391px;top:399px;width:1px;height:116px;background:#9b9b9b"></div>
<div class="a " style="left:391px;top:537px;width:1px;height:116px;background:#9b9b9b"></div>
<div class="a " style="left:469px;top:399px;width:1px;height:116px;background:#9b9b9b"></div>
<div class="a " style="left:469px;top:537px;width:1px;height:116px;background:#9b9b9b"></div>
<div class="a " style="left:524px;top:399px;width:1px;height:116px;background:#9b9b9b"></div>
<div class="a " style="left:524px;top:537px;width:1px;height:116px;background:#9b9b9b"></div>
<div class="a " style="left:583px;top:399px;width:1px;height:116px;background:#9b9b9b"></div>
<div class="a " style="left:583px;top:537px;width:1px;height:116px;background:#9b9b9b"></div>
<div class="a " style="left:629px;top:399px;width:1px;height:116px;background:#9b9b9b"></div>
<div class="a " style="left:675px;top:399px;width:1px;height:116px;background:#9b9b9b"></div>
<div class="a " style="left:721px;top:399px;width:1px;height:116px;background:#9b9b9b"></div>
<div class="a " style="left:767px;top:399px;width:1px;height:116px;background:#9b9b9b"></div>
<div class="a " style="left:813px;top:399px;width:1px;height:116px;background:#9b9b9b"></div>
<div class="a " style="left:859px;top:399px;width:1px;height:116px;background:#9b9b9b"></div>
<div class="a " style="left:905px;top:399px;width:1px;height:116px;background:#9b9b9b"></div>
<div class="a " style="left:81px;top:515px;width:869px;height:22px;background:#1e4a79"></div>
<div class="a " style="left:583px;top:491px;width:47px;height:1px;background:#9b9b9b"></div>
<div class="a " style="left:39px;top:672px;width:41px;height:22px;background:#1e4a79"></div>
<div class="a " style="left:39px;top:695px;width:41px;height:22px;background:#339966"></div>
<div class="a " style="left:39px;top:718px;width:41px;height:22px;background:#ffcc00"></div>
<div class="a " style="left:38px;top:671px;width:195px;height:1px;background:#9b9b9b"></div>
<div class="a " style="left:38px;top:694px;width:195px;height:1px;background:#9b9b9b"></div>
<div class="a " style="left:38px;top:717px;width:195px;height:1px;background:#9b9b9b"></div>
<div class="a " style="left:38px;top:740px;width:195px;height:1px;background:#9b9b9b"></div>
<div class="a " style="left:38px;top:671px;width:1px;height:70px;background:#9b9b9b"></div>
<div class="a " style="left:80px;top:671px;width:1px;height:70px;background:#9b9b9b"></div>
<div class="a " style="left:232px;top:671px;width:1px;height:70px;background:#9b9b9b"></div>
<div class="a " style="left:1px;top:754px;width:1022px;height:28px;background:#f7f7f7"></div>
<div class="a " style="left:1px;top:754px;width:1001px;height:1px;background:#a9a9a9"></div>
<div class="a " style="left:1005px;top:164px;width:15px;height:577px;background:#ededed"></div>
<div class="a " style="left:1005px;top:149px;width:15px;height:15px;background:#fff;border:1px solid #b4b4b4"></div>
<svg class="a" style="left:1009px;top:154px" width="7" height="4"><path d="M0 4H7L3.5 0Z" fill="#777"/></svg>
<div class="a " style="left:1005px;top:164px;width:15px;height:86px;background:#fff;border:1px solid #b4b4b4"></div>
<div class="a " style="left:1005px;top:740px;width:15px;height:15px;background:#fff;border:1px solid #b4b4b4"></div>
<svg class="a" style="left:1009px;top:746px" width="7" height="4"><path d="M0 0H7L3.5 4Z" fill="#777"/></svg>
<div class="a " style="left:101px;top:754px;width:95px;height:25px;background:#fff;border-left:1px solid #a9a9a9;border-right:1px solid #a9a9a9"></div>
<div class="a " style="left:101px;top:777px;width:95px;height:2px;background:#217346"></div>
<svg class="a" style="left:27px;top:763px" width="5" height="9"><path d="M5 0V9L0 4.5Z" fill="#c6c6c6"/></svg>
<svg class="a" style="left:56px;top:763px" width="5" height="9"><path d="M0 0V9L5 4.5Z" fill="#c6c6c6"/></svg>
<svg class="a" style="left:229px;top:760px" width="16" height="16"><circle cx="8" cy="8" r="7.4" fill="none" stroke="#777" stroke-width="1.1"/><path d="M4.5 8H11.5M8 4.5V11.5" stroke="#555" stroke-width="1.6"/></svg>
<div class="a " style="left:613.5px;top:764px;width:2px;height:2px;background:#c2c2c2"></div>
<div class="a " style="left:613.5px;top:768px;width:2px;height:2px;background:#c2c2c2"></div>
<div class="a " style="left:613.5px;top:772px;width:2px;height:2px;background:#c2c2c2"></div>
<div class="a " style="left:630px;top:761px;width:15px;height:15px;background:#fff;border:1px solid #b4b4b4"></div>
<svg class="a" style="left:635px;top:765px" width="4" height="7"><path d="M4 0V7L0 3.5Z" fill="#777"/></svg>
<div class="a " style="left:646px;top:762px;width:341px;height:13px;background:#eaeaea"></div>
<div class="a " style="left:646px;top:761px;width:320px;height:15px;background:#fff;border:1px solid #b4b4b4"></div>
<div class="a " style="left:987px;top:761px;width:15px;height:15px;background:#fff;border:1px solid #b4b4b4"></div>
<svg class="a" style="left:993px;top:765px" width="4" height="7"><path d="M0 0V7L4 3.5Z" fill="#777"/></svg>
<div class="a " style="left:0px;top:782px;width:1024px;height:23px;background:#217346"></div>
<svg class="a" style="left:62px;top:786px" width="13" height="13"><rect x="2.5" y="3.5" width="10" height="9" fill="none" stroke="#fff"/><path d="M2.5 6.5H12.5M2.5 9.5H12.5M5.5 6.5V12.5M8.5 6.5V12.5" stroke="#fff"/><circle cx="3" cy="3" r="3" fill="#fff"/></svg>
<div class="a " style="left:726px;top:782px;width:38px;height:23px;background:#15603a"></div>
<svg class="a" style="left:738px;top:786px" width="15" height="15"><rect x="0.5" y="0.5" width="14" height="14" fill="none" stroke="#fff"/><path d="M0.5 5.5H14.5M0.5 10H14.5M5.5 0.5V14.5M10 0.5V14.5" stroke="#fff"/></svg>
<svg class="a" style="left:776px;top:785px" width="15" height="15"><rect x="0.5" y="0.5" width="14" height="14" fill="none" stroke="#fff"/><rect x="3.5" y="3.5" width="8" height="8" fill="none" stroke="#fff"/><path d="M5 6H10M5 8.5H10" stroke="#fff"/></svg>
<svg class="a" style="left:814px;top:785px" width="15" height="15"><rect x="0.5" y="0.5" width="14" height="14" fill="none" stroke="#fff"/><path d="M3 0.5V7.5H8V0.5" fill="none" stroke="#fff"/><rect x="3" y="0" width="2.5" height="7" fill="#fff"/><rect x="6" y="0" width="2" height="7" fill="#fff"/></svg>
<div class="a " style="left:845px;top:792px;width:6px;height:2px;background:#fff"></div>
<div class="a " style="left:855px;top:792.5px;width:100px;height:1px;background:#fff"></div>
<div class="a " style="left:888px;top:786px;width:4px;height:13px;background:#fff"></div>
<div class="a " style="left:905px;top:789px;width:1px;height:7px;background:#fff"></div>
<div class="a " style="left:958px;top:792px;width:10px;height:2px;background:#fff"></div>
<div class="a " style="left:962px;top:788px;width:2px;height:10px;background:#fff"></div>
<svg class="a gs" style="left:0;top:0" width="1024" height="805" font-family="Liberation Sans, sans-serif"><text x="462.3" y="20.2" font-size="12.3" fill="#444" textLength="97.6" lengthAdjust="spacingAndGlyphs">Gantt Chart - Excel</text>
<text x="149.4" y="18.8" font-size="12.3" fill="#222" textLength="23.6" lengthAdjust="spacingAndGlyphs">Arial</text>
<text x="20" y="45.2" font-size="11.8" fill="#fff" textLength="21" lengthAdjust="spacingAndGlyphs">FILE</text>
<text x="77.5" y="45.2" font-size="11.8" fill="#217346" textLength="34.5" lengthAdjust="spacingAndGlyphs">HOME</text>
<text x="141.5" y="45.2" font-size="11.8" fill="#444" textLength="36.0" lengthAdjust="spacingAndGlyphs">INSERT</text>
<text x="207.5" y="45.2" font-size="11.8" fill="#444" textLength="74.0" lengthAdjust="spacingAndGlyphs">PAGE LAYOUT</text>
<text x="311" y="45.2" font-size="11.8" fill="#444" textLength="61.5" lengthAdjust="spacingAndGlyphs">FORMULAS</text>
<text x="401.5" y="45.2" font-size="11.8" fill="#444" textLength="28.5" lengthAdjust="spacingAndGlyphs">DATA</text>
<text x="459.8" y="45.2" font-size="11.8" fill="#444" textLength="39.1" lengthAdjust="spacingAndGlyphs">REVIEW</text>
<text x="528.4" y="45.2" font-size="11.8" fill="#444" textLength="26.4" lengthAdjust="spacingAndGlyphs">VIEW</text>
<text x="584.2" y="45.2" font-size="11.8" fill="#444" textLength="46.8" lengthAdjust="spacingAndGlyphs">ADD-INS</text>
<text x="660.4" y="45.2" font-size="11.8" fill="#444" textLength="31.5" lengthAdjust="spacingAndGlyphs">TEAM</text>
<text x="913.6" y="45.3" font-size="12.3" fill="#333" textLength="56" lengthAdjust="spacingAndGlyphs">Ivan Walsh</text>
<text x="996" y="47.8" font-size="17.5" fill="#fff" textLength="9.2" lengthAdjust="spacingAndGlyphs">K</text>
<text x="10.5" y="142" font-size="11.8" fill="#6a6a6a" textLength="50.1" lengthAdjust="spacingAndGlyphs">Clipboard</text>
<text x="171" y="142" font-size="11.8" fill="#6a6a6a" textLength="22.5" lengthAdjust="spacingAndGlyphs">Font</text>
<text x="342" y="142" font-size="11.8" fill="#6a6a6a" textLength="52.7" lengthAdjust="spacingAndGlyphs">Alignment</text>
<text x="501.9" y="142" font-size="11.8" fill="#6a6a6a" textLength="39.6" lengthAdjust="spacingAndGlyphs">Number</text>
<text x="670.6" y="142" font-size="11.8" fill="#6a6a6a" textLength="27.9" lengthAdjust="spacingAndGlyphs">Styles</text>
<text x="799" y="142" font-size="11.8" fill="#6a6a6a" textLength="24" lengthAdjust="spacingAndGlyphs">Cells</text>
<text x="900.6" y="142" font-size="11.8" fill="#6a6a6a" textLength="35.8" lengthAdjust="spacingAndGlyphs">Editing</text>
<text x="12.7" y="106.8" font-size="12.2" fill="#a9a9a9" textLength="27.3" lengthAdjust="spacingAndGlyphs">Paste</text>
<text x="94.3" y="80.8" font-size="12.3" fill="#222" textLength="24" lengthAdjust="spacingAndGlyphs">Arial</text>
<text x="205" y="80.8" font-size="12.3" fill="#222" textLength="6.6" lengthAdjust="spacingAndGlyphs">8</text>
<text x="251.4" y="81.7" font-size="13.6" fill="#555" textLength="9.6" lengthAdjust="spacingAndGlyphs">A</text>
<text x="274.2" y="81.7" font-size="10.6" fill="#555" textLength="7.5" lengthAdjust="spacingAndGlyphs">A</text>
<text x="97.8" y="110.8" font-size="12" fill="#444" font-weight="bold" textLength="7.4" lengthAdjust="spacingAndGlyphs">B</text>
<text x="121.3" y="110.8" font-size="12" fill="#444" font-weight="bold" font-style="italic" textLength="4.2" lengthAdjust="spacingAndGlyphs">I</text>
<text x="141.4" y="110.2" font-size="11.5" fill="#444" font-weight="bold" textLength="8.2" lengthAdjust="spacingAndGlyphs">U</text>
<text x="261.8" y="111" font-size="13.4" fill="#5e5e5e" font-weight="bold" textLength="9.4" lengthAdjust="spacingAndGlyphs">A</text>
<text x="468" y="80.8" font-size="12.3" fill="#222" textLength="40.5" lengthAdjust="spacingAndGlyphs">General</text>
<text x="503.4" y="113" font-size="15.3" fill="#555" textLength="12.4" lengthAdjust="spacingAndGlyphs">%</text>
<text x="528.6" y="107.2" font-size="17" fill="#555" font-weight="bold">,</text>
<text x="563.4" y="106.3" font-size="8.3" fill="#4a4a4a" textLength="6.8" lengthAdjust="spacingAndGlyphs">.0</text>
<text x="556.2" y="112.8" font-size="8.3" fill="#4a4a4a" textLength="11.8" lengthAdjust="spacingAndGlyphs">.00</text>
<text x="578.8" y="105.5" font-size="8.3" fill="#4a4a4a" textLength="11.4" lengthAdjust="spacingAndGlyphs">.00</text>
<text x="583.6" y="112.8" font-size="8.3" fill="#4a4a4a" textLength="6.6" lengthAdjust="spacingAndGlyphs">.0</text>
<text x="626.7" y="73" font-size="12.2" fill="#444" textLength="122.7" lengthAdjust="spacingAndGlyphs">Conditional Formatting</text>
<text x="626.7" y="95.6" font-size="12.2" fill="#444" textLength="82.3" lengthAdjust="spacingAndGlyphs">Format as Table</text>
<text x="626.7" y="118.7" font-size="12.2" fill="#444" textLength="51.9" lengthAdjust="spacingAndGlyphs">Cell Styles</text>
<text x="796.8" y="72.8" font-size="12.2" fill="#444" textLength="28.1" lengthAdjust="spacingAndGlyphs">Insert</text>
<text x="796.8" y="95.5" font-size="12.2" fill="#444" textLength="31.9" lengthAdjust="spacingAndGlyphs">Delete</text>
<text x="796.8" y="118.6" font-size="12.2" fill="#444" textLength="36.9" lengthAdjust="spacingAndGlyphs">Format</text>
<text x="904.6" y="74.3" font-size="14.6" fill="#3a78c4" text-anchor="middle" textLength="10.6" lengthAdjust="spacingAndGlyphs" stroke="#3a78c4" stroke-width=".5">A</text>
<text x="904.8" y="88.3" font-size="15.4" fill="#a04cb8" text-anchor="middle" textLength="9.8" lengthAdjust="spacingAndGlyphs" stroke="#a04cb8" stroke-width=".5">Z</text>
<text x="897.2" y="106.7" font-size="12.2" fill="#444" textLength="33.4" lengthAdjust="spacingAndGlyphs">Sort &amp;</text>
<text x="897.9" y="122.4" font-size="12.2" fill="#444" textLength="25.1" lengthAdjust="spacingAndGlyphs">Filter</text>
<text x="939.5" y="106.7" font-size="12.2" fill="#444" textLength="34.9" lengthAdjust="spacingAndGlyphs">Find &amp;</text>
<text x="937.4" y="122.4" font-size="12.2" fill="#444" textLength="30.1" lengthAdjust="spacingAndGlyphs">Select</text>
<text x="887.6" y="19.7" font-size="13.4" fill="#5a5a5a" font-weight="bold" textLength="7.2" lengthAdjust="spacingAndGlyphs">?</text>
<text x="30.0" y="155.6" font-size="9.2" fill="#444" text-anchor="middle">A</text>
<text x="60.0" y="155.6" font-size="9.2" fill="#444" text-anchor="middle">B</text>
<text x="157.0" y="155.6" font-size="9.2" fill="#444" text-anchor="middle">C</text>
<text x="284.5" y="155.6" font-size="9.2" fill="#444" text-anchor="middle">D</text>
<text x="364.0" y="155.6" font-size="9.2" fill="#444" text-anchor="middle">E</text>
<text x="431.0" y="155.6" font-size="9.2" fill="#444" text-anchor="middle">F</text>
<text x="497.5" y="155.6" font-size="9.2" fill="#444" text-anchor="middle">G</text>
<text x="554.5" y="155.6" font-size="9.2" fill="#444" text-anchor="middle">H</text>
<text x="607.0" y="155.6" font-size="9.2" fill="#444" text-anchor="middle">I</text>
<text x="653.0" y="155.6" font-size="9.2" fill="#444" text-anchor="middle">J</text>
<text x="699.0" y="155.6" font-size="9.2" fill="#444" text-anchor="middle">K</text>
<text x="745.0" y="155.6" font-size="9.2" fill="#444" text-anchor="middle">L</text>
<text x="791.0" y="155.7" font-size="10" fill="#217346" font-weight="bold" text-anchor="middle">M</text>
<text x="837.0" y="155.6" font-size="9.2" fill="#444" text-anchor="middle">N</text>
<text x="883.0" y="155.6" font-size="9.2" fill="#444" text-anchor="middle">O</text>
<text x="928.5" y="155.6" font-size="9.2" fill="#444" text-anchor="middle">P</text>
<text x="973.5" y="155.6" font-size="9.2" fill="#444" text-anchor="middle">Q</text>
<text x="10.6" y="166.6" font-size="9.8" fill="#444" text-anchor="middle" textLength="4.6" lengthAdjust="spacingAndGlyphs">1</text>
<text x="10.6" y="199.6" font-size="9.8" fill="#444" text-anchor="middle" textLength="4.6" lengthAdjust="spacingAndGlyphs">2</text>
<text x="10.6" y="222.6" font-size="9.8" fill="#444" text-anchor="middle" textLength="4.6" lengthAdjust="spacingAndGlyphs">3</text>
<text x="10.6" y="245.6" font-size="9.8" fill="#444" text-anchor="middle" textLength="4.6" lengthAdjust="spacingAndGlyphs">4</text>
<text x="10.6" y="268.6" font-size="9.8" fill="#444" text-anchor="middle" textLength="4.6" lengthAdjust="spacingAndGlyphs">5</text>
<text x="10.6" y="291.6" font-size="9.8" fill="#444" text-anchor="middle" textLength="4.6" lengthAdjust="spacingAndGlyphs">6</text>
<text x="10.6" y="314.6" font-size="9.8" fill="#444" text-anchor="middle" textLength="4.6" lengthAdjust="spacingAndGlyphs">7</text>
<text x="10.6" y="337.6" font-size="9.8" fill="#444" text-anchor="middle" textLength="4.6" lengthAdjust="spacingAndGlyphs">8</text>
<text x="10.6" y="360.6" font-size="9.8" fill="#444" text-anchor="middle" textLength="4.6" lengthAdjust="spacingAndGlyphs">9</text>
<text x="10.6" y="383.6" font-size="9.8" fill="#444" text-anchor="middle" textLength="8.4" lengthAdjust="spacingAndGlyphs">10</text>
<text x="10.6" y="396.6" font-size="9.8" fill="#444" text-anchor="middle" textLength="8.4" lengthAdjust="spacingAndGlyphs">11</text>
<text x="10.6" y="419.6" font-size="9.8" fill="#444" text-anchor="middle" textLength="8.4" lengthAdjust="spacingAndGlyphs">12</text>
<text x="10.6" y="442.6" font-size="9.8" fill="#444" text-anchor="middle" textLength="8.4" lengthAdjust="spacingAndGlyphs">13</text>
<text x="10.6" y="465.6" font-size="9.8" fill="#444" text-anchor="middle" textLength="8.4" lengthAdjust="spacingAndGlyphs">14</text>
<text x="10.6" y="488.6" font-size="9.8" fill="#444" text-anchor="middle" textLength="8.4" lengthAdjust="spacingAndGlyphs">15</text>
<text x="10.6" y="511.6" font-size="9.8" fill="#444" text-anchor="middle" textLength="8.4" lengthAdjust="spacingAndGlyphs">16</text>
<text x="10.6" y="534.6" font-size="9.8" fill="#444" text-anchor="middle" textLength="8.4" lengthAdjust="spacingAndGlyphs">17</text>
<text x="10.6" y="557.6" font-size="9.8" fill="#444" text-anchor="middle" textLength="8.4" lengthAdjust="spacingAndGlyphs">18</text>
<text x="10.6" y="580.6" font-size="9.8" fill="#444" text-anchor="middle" textLength="8.4" lengthAdjust="spacingAndGlyphs">19</text>
<text x="10.6" y="603.6" font-size="9.8" fill="#444" text-anchor="middle" textLength="8.4" lengthAdjust="spacingAndGlyphs">20</text>
<text x="10.6" y="626.6" font-size="9.8" fill="#444" text-anchor="middle" textLength="8.4" lengthAdjust="spacingAndGlyphs">21</text>
<text x="10.6" y="649.6" font-size="9.8" fill="#444" text-anchor="middle" textLength="8.4" lengthAdjust="spacingAndGlyphs">22</text>
<text x="10.6" y="668.6" font-size="9.8" fill="#444" text-anchor="middle" textLength="8.4" lengthAdjust="spacingAndGlyphs">23</text>
<text x="10.6" y="691.6" font-size="9.8" fill="#444" text-anchor="middle" textLength="8.4" lengthAdjust="spacingAndGlyphs">24</text>
<text x="10.6" y="714.6" font-size="9.8" fill="#444" text-anchor="middle" textLength="8.4" lengthAdjust="spacingAndGlyphs">25</text>
<text x="10.6" y="737.6" font-size="9.8" fill="#444" text-anchor="middle" textLength="8.4" lengthAdjust="spacingAndGlyphs">26</text>
<text x="42" y="192.6" font-size="22.6" fill="#2a69a6" textLength="107" lengthAdjust="spacingAndGlyphs" stroke="#fff" stroke-width=".25">Gantt Chart</text>
<text x="261.7" y="217.4" font-size="10.7" fill="#fff" font-weight="bold" textLength="99.6" lengthAdjust="spacingAndGlyphs">Project Information</text>
<text x="682.6" y="217.4" font-size="10.7" fill="#fff" font-weight="bold" textLength="57.8" lengthAdjust="spacingAndGlyphs">Gantt Chart</text>
<text x="747.4" y="217.4" font-size="9.8" fill="#fff" font-style="italic" textLength="58.2" lengthAdjust="spacingAndGlyphs">(End of Week)</text>
<text x="49.6" y="240.4" font-size="10.7" fill="#000" font-weight="bold" textLength="10.3" lengthAdjust="spacingAndGlyphs">ID</text>
<text x="91.6" y="240.4" font-size="10.7" fill="#000" font-weight="bold" textLength="69.3" lengthAdjust="spacingAndGlyphs">Project Name</text>
<text x="243.6" y="240.4" font-size="10.7" fill="#000" font-weight="bold" textLength="29.9" lengthAdjust="spacingAndGlyphs">Owner</text>
<text x="346.6" y="240.4" font-size="10.7" fill="#000" font-weight="bold" textLength="35.5" lengthAdjust="spacingAndGlyphs">Budget</text>
<text x="402.6" y="240.4" font-size="10.7" fill="#000" font-weight="bold" textLength="43.6" lengthAdjust="spacingAndGlyphs">Duration</text>
<text x="480.6" y="240.4" font-size="10.7" fill="#000" font-weight="bold" textLength="24.3" lengthAdjust="spacingAndGlyphs">Start</text>
<text x="535.6" y="240.4" font-size="10.7" fill="#000" font-weight="bold" textLength="18.3" lengthAdjust="spacingAndGlyphs">End</text>
<text x="594.6" y="240.4" font-size="10.7" fill="#000" font-weight="bold" textLength="24.6" lengthAdjust="spacingAndGlyphs">9-Jul</text>
<text x="640.6" y="240.4" font-size="10.7" fill="#000" font-weight="bold" textLength="29.3" lengthAdjust="spacingAndGlyphs">16-Jul</text>
<text x="686.6" y="240.4" font-size="10.7" fill="#000" font-weight="bold" textLength="30.9" lengthAdjust="spacingAndGlyphs">23-Jul</text>
<text x="732.6" y="240.4" font-size="10.7" fill="#000" font-weight="bold" textLength="30.9" lengthAdjust="spacingAndGlyphs">30-Jul</text>
<text x="778.6" y="240.4" font-size="10.7" fill="#000" font-weight="bold" textLength="29.7" lengthAdjust="spacingAndGlyphs">6-Aug</text>
<path d="M821.30 233.30h1.7v7.2h-1.7zM823.70 233.30h1.7v7.2h-1.7zM820.20 235.00h6.3v1.5h-6.3zM820.20 237.50h6.3v1.5h-6.3zM828.15 233.30h1.7v7.2h-1.7zM830.55 233.30h1.7v7.2h-1.7zM827.05 235.00h6.3v1.5h-6.3zM827.05 237.50h6.3v1.5h-6.3zM835.00 233.30h1.7v7.2h-1.7zM837.40 233.30h1.7v7.2h-1.7zM833.90 235.00h6.3v1.5h-6.3zM833.90 237.50h6.3v1.5h-6.3zM841.85 233.30h1.7v7.2h-1.7zM844.25 233.30h1.7v7.2h-1.7zM840.75 235.00h6.3v1.5h-6.3zM840.75 237.50h6.3v1.5h-6.3zM848.70 233.30h1.7v7.2h-1.7zM851.10 233.30h1.7v7.2h-1.7zM847.60 235.00h6.3v1.5h-6.3zM847.60 237.50h6.3v1.5h-6.3z" fill="#000"/>
<path d="M867.30 233.30h1.7v7.2h-1.7zM869.70 233.30h1.7v7.2h-1.7zM866.20 235.00h6.3v1.5h-6.3zM866.20 237.50h6.3v1.5h-6.3zM874.15 233.30h1.7v7.2h-1.7zM876.55 233.30h1.7v7.2h-1.7zM873.05 235.00h6.3v1.5h-6.3zM873.05 237.50h6.3v1.5h-6.3zM881.00 233.30h1.7v7.2h-1.7zM883.40 233.30h1.7v7.2h-1.7zM879.90 235.00h6.3v1.5h-6.3zM879.90 237.50h6.3v1.5h-6.3zM887.85 233.30h1.7v7.2h-1.7zM890.25 233.30h1.7v7.2h-1.7zM886.75 235.00h6.3v1.5h-6.3zM886.75 237.50h6.3v1.5h-6.3zM894.70 233.30h1.7v7.2h-1.7zM897.10 233.30h1.7v7.2h-1.7zM893.60 235.00h6.3v1.5h-6.3zM893.60 237.50h6.3v1.5h-6.3z" fill="#000"/>
<text x="916.6" y="240.4" font-size="10.7" fill="#000" font-weight="bold" textLength="32.2" lengthAdjust="spacingAndGlyphs">Status</text>
<text x="49.4 54.4 56.7" y="263.4" font-size="9.8" fill="#000">0.1</text>
<text x="91.6" y="263.4" font-size="9.8" fill="#000" textLength="109.2" lengthAdjust="spacingAndGlyphs">Software Project - Phase 1</text>
<text x="346.6" y="263.4" font-size="9.8" fill="#000" textLength="29.5" lengthAdjust="spacingAndGlyphs">100,000</text>
<text x="402.6" y="263.4" font-size="9.8" fill="#000" textLength="12.7" lengthAdjust="spacingAndGlyphs">100</text>
<text x="49.4 54.4 56.7 60.6 62.9" y="286.4" font-size="9.8" fill="#000">0.1.1</text>
<text x="91.6" y="286.4" font-size="9.8" fill="#000" textLength="73" lengthAdjust="spacingAndGlyphs">Planned (to date):</text>
<text x="346.6" y="286.4" font-size="9.8" fill="#000" textLength="26.4" lengthAdjust="spacingAndGlyphs">50,000</text>
<text x="402.6" y="286.4" font-size="9.8" fill="#000" textLength="9.5" lengthAdjust="spacingAndGlyphs">55</text>
<text x="49.4 54.4 56.7 60.6 62.9" y="309.4" font-size="9.8" fill="#000">0.1.2</text>
<text x="91.6" y="309.4" font-size="9.8" fill="#000" textLength="65.8" lengthAdjust="spacingAndGlyphs">Actual (to date):</text>
<text x="346.6" y="309.4" font-size="9.8" fill="#000" textLength="26.4" lengthAdjust="spacingAndGlyphs">65,000</text>
<text x="402.6" y="309.4" font-size="9.8" fill="#000" textLength="9.5" lengthAdjust="spacingAndGlyphs">65</text>
<text x="49.4 54.4 56.7 60.6 62.9" y="332.4" font-size="9.8" fill="#000">0.1.3</text>
<text x="91.6" y="332.4" font-size="9.8" fill="#000" textLength="37.9" lengthAdjust="spacingAndGlyphs">Variance:</text>
<text x="346.6" y="332.4" font-size="9.8" fill="#f00" textLength="27.4" lengthAdjust="spacingAndGlyphs">-15,000</text>
<text x="402.6" y="332.4" font-size="9.8" fill="#f00" textLength="13.7" lengthAdjust="spacingAndGlyphs">(10)</text>
<text x="49.4 54.4 56.7 60.6 62.9" y="355.4" font-size="9.8" fill="#000">0.1.4</text>
<text x="91.6" y="355.4" font-size="9.8" fill="#000" textLength="73.8" lengthAdjust="spacingAndGlyphs">Dependencies on:</text>
<text x="49.4 54.4 56.7 60.6 62.9" y="378.4" font-size="9.8" fill="#000">0.1.5</text>
<text x="91.6" y="378.4" font-size="9.8" fill="#000" textLength="74.8" lengthAdjust="spacingAndGlyphs">Dependencies for:</text>
<text x="594.6" y="355.4" font-size="10.7" fill="#000" font-weight="bold" textLength="57.4" lengthAdjust="spacingAndGlyphs">Comments:</text>
<text x="658.3" y="355.4" font-size="9.8" fill="#00f" font-style="italic" textLength="208" lengthAdjust="spacingAndGlyphs">Provide comments on overall health of the project.</text>
<text x="49.6" y="414.4" font-size="10.7" fill="#000" font-weight="bold" textLength="10.3" lengthAdjust="spacingAndGlyphs">ID</text>
<text x="243.6" y="414.4" font-size="10.7" fill="#000" font-weight="bold" textLength="62.9" lengthAdjust="spacingAndGlyphs">Assigned To</text>
<text x="346.6" y="414.4" font-size="10.7" fill="#000" font-weight="bold" textLength="24.6" lengthAdjust="spacingAndGlyphs">Cost</text>
<text x="402.6" y="414.4" font-size="10.7" fill="#000" font-weight="bold" textLength="43.6" lengthAdjust="spacingAndGlyphs">Duration</text>
<text x="480.6" y="414.4" font-size="10.7" fill="#000" font-weight="bold" textLength="24.3" lengthAdjust="spacingAndGlyphs">Start</text>
<text x="535.6" y="414.4" font-size="10.7" fill="#000" font-weight="bold" textLength="18.3" lengthAdjust="spacingAndGlyphs">End</text>
<text x="594.6" y="414.4" font-size="10.7" fill="#000" font-weight="bold" textLength="24.6" lengthAdjust="spacingAndGlyphs">9-Jul</text>
<text x="640.6" y="414.4" font-size="10.7" fill="#000" font-weight="bold" textLength="29.3" lengthAdjust="spacingAndGlyphs">16-Jul</text>
<text x="686.6" y="414.4" font-size="10.7" fill="#000" font-weight="bold" textLength="30.9" lengthAdjust="spacingAndGlyphs">23-Jul</text>
<text x="732.6" y="414.4" font-size="10.7" fill="#000" font-weight="bold" textLength="30.9" lengthAdjust="spacingAndGlyphs">30-Jul</text>
<text x="778.6" y="414.4" font-size="10.7" fill="#000" font-weight="bold" textLength="29.7" lengthAdjust="spacingAndGlyphs">6-Aug</text>
<path d="M821.30 407.30h1.7v7.2h-1.7zM823.70 407.30h1.7v7.2h-1.7zM820.20 409.00h6.3v1.5h-6.3zM820.20 411.50h6.3v1.5h-6.3zM828.15 407.30h1.7v7.2h-1.7zM830.55 407.30h1.7v7.2h-1.7zM827.05 409.00h6.3v1.5h-6.3zM827.05 411.50h6.3v1.5h-6.3zM835.00 407.30h1.7v7.2h-1.7zM837.40 407.30h1.7v7.2h-1.7zM833.90 409.00h6.3v1.5h-6.3zM833.90 411.50h6.3v1.5h-6.3zM841.85 407.30h1.7v7.2h-1.7zM844.25 407.30h1.7v7.2h-1.7zM840.75 409.00h6.3v1.5h-6.3zM840.75 411.50h6.3v1.5h-6.3zM848.70 407.30h1.7v7.2h-1.7zM851.10 407.30h1.7v7.2h-1.7zM847.60 409.00h6.3v1.5h-6.3zM847.60 411.50h6.3v1.5h-6.3z" fill="#000"/>
<path d="M867.30 407.30h1.7v7.2h-1.7zM869.70 407.30h1.7v7.2h-1.7zM866.20 409.00h6.3v1.5h-6.3zM866.20 411.50h6.3v1.5h-6.3zM874.15 407.30h1.7v7.2h-1.7zM876.55 407.30h1.7v7.2h-1.7zM873.05 409.00h6.3v1.5h-6.3zM873.05 411.50h6.3v1.5h-6.3zM881.00 407.30h1.7v7.2h-1.7zM883.40 407.30h1.7v7.2h-1.7zM879.90 409.00h6.3v1.5h-6.3zM879.90 411.50h6.3v1.5h-6.3zM887.85 407.30h1.7v7.2h-1.7zM890.25 407.30h1.7v7.2h-1.7zM886.75 409.00h6.3v1.5h-6.3zM886.75 411.50h6.3v1.5h-6.3zM894.70 407.30h1.7v7.2h-1.7zM897.10 407.30h1.7v7.2h-1.7zM893.60 409.00h6.3v1.5h-6.3zM893.60 411.50h6.3v1.5h-6.3z" fill="#000"/>
<text x="916.6" y="414.4" font-size="10.7" fill="#000" font-weight="bold" textLength="32.2" lengthAdjust="spacingAndGlyphs">Status</text>
<text x="91.6" y="408.4" font-size="10.7" fill="#000" font-weight="bold" textLength="117.6" lengthAdjust="spacingAndGlyphs">Deliverable Name/Task</text>
<text x="91.6" y="420.4" font-size="10.7" fill="#000" font-weight="bold" textLength="28.5" lengthAdjust="spacingAndGlyphs">Name</text>
<text x="49.0 52.9 55.2" y="437.4" font-size="9.8" fill="#000">1.1</text>
<text x="91.6" y="437.4" font-size="9.8" fill="#000" textLength="114.5" lengthAdjust="spacingAndGlyphs">Software Project - Phase 1.1</text>
<text x="346.6" y="437.4" font-size="10.7" fill="#000" font-weight="bold" textLength="32.4" lengthAdjust="spacingAndGlyphs">50,000</text>
<text x="402.6" y="437.4" font-size="10.7" fill="#000" font-weight="bold" textLength="31.6" lengthAdjust="spacingAndGlyphs">5 days</text>
<text x="49.0 52.9 55.2 59.1 61.4" y="460.4" font-size="9.8" fill="#000">1.1.1</text>
<text x="91.6" y="460.4" font-size="9.8" fill="#000" textLength="71.5" lengthAdjust="spacingAndGlyphs">Define objectives</text>
<text x="346.6" y="460.4" font-size="9.8" fill="#000" textLength="26.5" lengthAdjust="spacingAndGlyphs">30,000</text>
<text x="402.6" y="460.4" font-size="9.8" fill="#000" textLength="25.4" lengthAdjust="spacingAndGlyphs">3 days</text>
<text x="49.0 52.9 55.2 59.1 61.4" y="483.4" font-size="9.8" fill="#000">1.1.2</text>
<text x="91.6" y="483.4" font-size="9.8" fill="#000" textLength="69.5" lengthAdjust="spacingAndGlyphs">Develop schema</text>
<text x="346.6" y="483.4" font-size="9.8" fill="#000" textLength="24.6" lengthAdjust="spacingAndGlyphs">10,000</text>
<text x="402.6" y="483.4" font-size="9.8" fill="#000" textLength="19.1" lengthAdjust="spacingAndGlyphs">1 day</text>
<text x="49.0 52.9 55.2 59.1 61.4" y="506.4" font-size="9.8" fill="#000">1.1.3</text>
<text x="91.6" y="506.4" font-size="9.8" fill="#000" textLength="92.6" lengthAdjust="spacingAndGlyphs">Assess pros and cons</text>
<text x="346.6" y="506.4" font-size="9.8" fill="#000" textLength="26.5" lengthAdjust="spacingAndGlyphs">25,000</text>
<text x="402.6" y="506.4" font-size="9.8" fill="#000" textLength="25.4" lengthAdjust="spacingAndGlyphs">3 days</text>
<text x="91.6" y="529.4" font-size="10.7" fill="#fff" font-weight="bold" textLength="46.1" lengthAdjust="spacingAndGlyphs">Summary</text>
<text x="91.6" y="552.4" font-size="9.8" fill="#000" textLength="73" lengthAdjust="spacingAndGlyphs">Planned (to date):</text>
<text x="346.6" y="552.4" font-size="9.8" fill="#000" textLength="26.5" lengthAdjust="spacingAndGlyphs">50,000</text>
<text x="402.6" y="552.4" font-size="9.8" fill="#000" textLength="7.8" lengthAdjust="spacingAndGlyphs">10</text>
<text x="91.6" y="575.4" font-size="9.8" fill="#000" textLength="65.8" lengthAdjust="spacingAndGlyphs">Actual (to date):</text>
<text x="346.6" y="575.4" font-size="9.8" fill="#000" textLength="26.5" lengthAdjust="spacingAndGlyphs">65,000</text>
<text x="402.6" y="575.4" font-size="9.8" fill="#000" textLength="7.8" lengthAdjust="spacingAndGlyphs">12</text>
<text x="91.6" y="598.4" font-size="9.8" fill="#000" textLength="37.9" lengthAdjust="spacingAndGlyphs">Variance:</text>
<text x="346.6" y="598.4" font-size="9.8" fill="#f00" textLength="27.7" lengthAdjust="spacingAndGlyphs">-15,000</text>
<text x="402.6" y="598.4" font-size="9.8" fill="#f00" textLength="10.9" lengthAdjust="spacingAndGlyphs">(2)</text>
<text x="91.6" y="621.4" font-size="9.8" fill="#000" textLength="73.8" lengthAdjust="spacingAndGlyphs">Dependencies on:</text>
<text x="91.6" y="644.4" font-size="9.8" fill="#000" textLength="74.8" lengthAdjust="spacingAndGlyphs">Dependencies for:</text>
<text x="594.6" y="598.4" font-size="10.7" fill="#000" font-weight="bold" textLength="57.4" lengthAdjust="spacingAndGlyphs">Comments:</text>
<text x="658.3" y="598.4" font-size="9.8" fill="#00f" font-style="italic" textLength="80.9" lengthAdjust="spacingAndGlyphs">Provide comments.</text>
<text x="91.6" y="686.4" font-size="9.8" fill="#000" textLength="34" lengthAdjust="spacingAndGlyphs">Planned</text>
<text x="91.6" y="709.4" font-size="9.8" fill="#000" textLength="64.8" lengthAdjust="spacingAndGlyphs">Planned to date</text>
<text x="91.6" y="732.4" font-size="9.8" fill="#000" textLength="27" lengthAdjust="spacingAndGlyphs">Actual</text>
<text x="113.5" y="772" font-size="13.4" fill="#217346" font-weight="bold" textLength="70.5" lengthAdjust="spacingAndGlyphs">Gantt Chart</text>
<text x="8.7" y="797.4" font-size="12" fill="#fff" textLength="32" lengthAdjust="spacingAndGlyphs">READY</text>
<text x="981.5" y="797.4" font-size="12" fill="#fff" textLength="21.5" lengthAdjust="spacingAndGlyphs">70%</text></svg>
</body></html>
